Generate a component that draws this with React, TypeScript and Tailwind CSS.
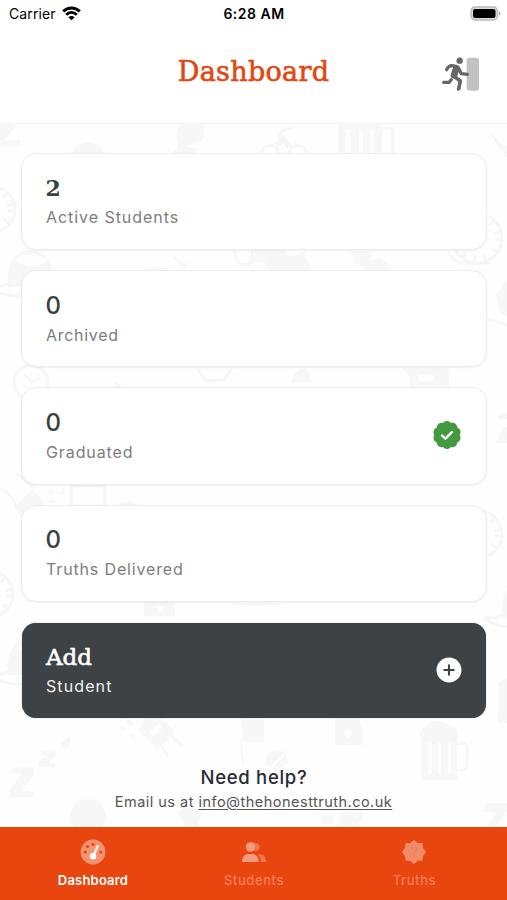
// src/App.tsx
import type { ReactNode } from "react";

interface StatCardProps {
    value: string;
    label: string;
    labelClass: string;
    valueClass?: string;
    icon?: ReactNode;
}

interface TabProps {
    label: string;
    labelClass: string;
    icon: ReactNode;
}

// Contorno ondulado del sello
const scallop = (cx: number, cy: number, r: number, bumps: number, depth: number) => {
    const points: string[] = [];
    for (let i = 0; i < 120; i++) {
        const a = (i / 120) * Math.PI * 2;
        const d = r - depth * (1 - Math.abs(Math.cos(a * (bumps / 2))));
        points.push(`${(cx + Math.sin(a) * d).toFixed(2)},${(cy - Math.cos(a) * d).toFixed(2)}`);
    }
    return points.join(" ");
};

const WifiIcon = () => (
    <svg width="19" height="15" viewBox="0 0 19 15" fill="none" stroke="#000" strokeWidth="2.9">
        <path d="M1.2 5.4C6 .8 13 .8 17.8 5.4" />
        <path d="M4.2 8.7C7.3 5.8 11.7 5.8 14.8 8.7" />
        <path d="M9.5 14.3 6.4 11.2C8.1 9.7 10.9 9.7 12.6 11.2Z" fill="#000" stroke="none" />
    </svg>
);

const BatteryIcon = () => (
    <svg width="31" height="15" viewBox="0 0 31 15">
        <rect x="1" y="1" width="26.5" height="13" rx="4" fill="#ddd" stroke="#b9b9b9" strokeWidth="1.3" />
        <rect x="3" y="3" width="22.5" height="9" rx="2" fill="#000" />
        <path d="M28.8 5.3C30.8 6 30.8 9 28.8 9.7Z" fill="#a8a8a8" />
    </svg>
);

const ExitIcon = () => (
    <svg width="40" height="37" viewBox="30 30 120 111" fill="none" stroke="#676767" strokeLinecap="round" strokeLinejoin="round">
        <rect x="110" y="38" width="37" height="99" rx="9" fill="#c2c2c2" stroke="none" />
        <circle cx="89" cy="47" r="9.5" fill="#676767" stroke="none" />
        <path d="M50 74C54 65 58 62 66 62L80 65" strokeWidth="10" />
        <path d="M79 70 72 91" strokeWidth="20" />
        <path d="M86 70 94 86 112 88" strokeWidth="10" />
        <path d="M72 94 91 108 86 132" strokeWidth="11" />
        <path d="M41 112H57L64 104" strokeWidth="10" />
    </svg>
);

const VerifiedIcon = () => (
    <svg className="-mt-[2px]" width="28" height="28" viewBox="0 0 28 28">
        <polygon points={scallop(14, 14, 14, 10, 1.3)} fill="#43993f" />
        <path d="M9 14.5 12.4 17.7 18.9 11.2" fill="none" stroke="#fff" strokeWidth="2.4" strokeLinecap="round" strokeLinejoin="round" />
    </svg>
);

const PlusIcon = () => (
    <svg className="-mt-[1px]" width="26" height="26" viewBox="0 0 26 26">
        <circle cx="13" cy="13" r="12.5" fill="#fff" />
        <path d="M13 8.3V17.7M8.3 13H17.7" stroke="#3e4244" strokeWidth="2.1" strokeLinecap="round" />
    </svg>
);

const GaugeIcon = () => (
    <svg width="26" height="26" viewBox="0 0 26 26">
        <circle cx="13" cy="13" r="12.4" fill="#f49372" />
        <g fill="#e8450f">
            <circle cx="5.2" cy="13" r="1.6" />
            <circle cx="7.5" cy="7.5" r="1.6" />
            <circle cx="13" cy="5.3" r="1.6" />
            <circle cx="20.8" cy="13" r="1.6" />
        </g>
        <path d="M17.7 7.2 13.2 17" stroke="#fff" strokeWidth="2.2" strokeLinecap="round" />
        <circle cx="13" cy="17.3" r="3.2" fill="#fff" />
    </svg>
);

const UsersIcon = () => (
    <svg width="26" height="26" viewBox="0 0 26 26">
        <g fill="#ef754a">
            <path d="M13.3 3.8a4.3 4.3 0 1 1 0 8.4q2.2-4.2 0-8.4Z" />
            <path d="M16.3 15.8C22 14 25 17.5 25.3 23H19.8C19.5 19.5 18.5 17.2 16.3 15.8Z" />
        </g>
        <circle cx="9.6" cy="8" r="4.8" fill="#f49b7d" />
        <path d="M1 23C1 18 3.5 15 7 15H11.5C15 15 17.7 18 17.7 23Z" fill="#f49b7d" />
    </svg>
);

const TruthIcon = () => (
    <svg width="26" height="26" viewBox="0 0 26 26">
        <polygon
            points="13,.8 16.4,3.9 21.4,3.9 22.1,9 25.2,13 22.1,17 21.4,21.6 16.4,22.1 13,25.2 9.6,22.1 4.6,21.6 3.9,17 .8,13 3.9,9 4.6,3.9 9.6,3.9"
            fill="#f28b68"
        />
        <path d="M10.3 10.2C10.6 7.2 15.8 7.4 15.6 10.4C15.5 12.5 13 12.2 13 14.6M13 17.5V18" fill="none" stroke="#f07c54" strokeWidth="1.3" strokeLinecap="round" />
    </svg>
);

const OrangeSlice = ({ x, y, r = 23 }: { x: number; y: number; r?: number }) => (
    <g transform={`translate(${x} ${y})`} fill="none" stroke="#f6f6f6">
        <circle r={r} strokeWidth="3" />
        <circle r={r - 4.5} strokeWidth="6" strokeDasharray="3 8" />
    </g>
);

const Cap = ({ x, y }: { x: number; y: number }) => (
    <g transform={`translate(${x} ${y})`}>
        <path d="M0 38C-2 16 5 3 17 0C31-2 42 5 44 18L43 43C28 43 12 33 0 38Z" />
        <path d="M8 11C15 1 32 3 41 10C32 17 18 18 8 11Z" fill="#fdfdfd" />
        <path d="M0 33C-8 39-13 35-17 37C-8 47 18 48 41 43" fill="none" stroke="#f6f6f6" strokeWidth="3" />
    </g>
);

// Dibujos tenues del fondo
const Doodles = () => (
    <svg className="absolute inset-0 h-full w-full" viewBox="0 124 507 702" fill="#f7f7f7" aria-hidden="true">
        <path d="M0 124H17L5 140H20V146H0Z" />
        <ellipse cx="88" cy="158" rx="17" ry="16" />
        <path d="M180 124H204V137C199 146 190 143 186 146L197 149L196 155H169L178 147L176 134Z" />
        <g fill="none" stroke="#f6f6f6" strokeWidth="3">
            <circle cx="270" cy="154" r="9" />
            <circle cx="298" cy="154" r="9" />
            <path d="M277 145 283 139 290 147" strokeWidth="6" />
            <path d="M279 140C277 134 283 128 292 128" />
        </g>
        <path d="M338 124H382V160H338Z" />
        <path d="M346 129H351V160H346ZM359 129H363V160H359ZM370 129H374V160H370Z" fill="#fdfdfd" />
        <path d="M382 128H391Q393 128 393 132V160" fill="none" stroke="#f6f6f6" strokeWidth="3" />
        <path d="M490 132 502 145 507 147V157L500 148Z" stroke="#f6f6f6" />
        <OrangeSlice x={-8} y={209} />
        <OrangeSlice x={477} y={238} r={25} />
        <path d="M448 252C454 259 455 263 466 263H490" fill="none" stroke="#f6f6f6" strokeWidth="3" />
        <Cap x={8} y={250} />
        <path d="M145 269Q160 265 172 269ZM172 256 184 269 188 264Z" />
        <path d="M233 246H252V260Q248 268 238 263Z" fill="none" stroke="#f6f6f6" strokeWidth="3" />
        <path d="M254 250H284Q287 258 296 255L305 250V257Q312 264 310 272H270L265 262H254Z" />
        <path d="M350 251H374L370 260L379 258L390 265L393 256L386 276H366L364 266L356 265Z" />
        <path d="M507 279 496 294 499 311 507 316Z" />
        <path d="M487 319 497 321 507 325" fill="none" stroke="#f6f6f6" strokeWidth="3" />
        <g fill="none" stroke="#f6f6f6" strokeWidth="3">
            <circle cx="31" cy="382" r="17" />
            <path d="M24 374 31 382 42 377M23 386H26M32 392V394" strokeWidth="2" />
            <path d="M197 368 205 380H224L232 368" />
        </g>
        <path d="M115 381 123 387H115ZM291 382Q297 363 309 371Q308 379 316 382Z" />
        <path d="M402 368H449V389H410V377ZM419 374H433V381H419Z" fillRule="evenodd" />
        <path d="M499 413H507V419H499ZM503 427H507V443H496Z" />
        <path d="M14 507 32 489 45 502 24 520Z" />
        <path d="M0 489Q12 493 16 507M16 473 34 488" fill="none" stroke="#f6f6f6" strokeWidth="2.5" />
        <path d="M48 491 51 488 54 496ZM59 494 64 487V495ZM48 502 53 499 57 503Z" />
        <path d="M71 486H105V506H71Z" fill="none" stroke="#f6f6f6" strokeWidth="3" />
        <ellipse cx="128" cy="505" rx="9" ry="4" />
        <OrangeSlice x={479} y={534} />
        <OrangeSlice x={-10} y={594} />
        <path d="M144 599H175V616H144ZM156 605 160 613 164 607Z" fillRule="evenodd" />
        <path d="M229 603H287Q270 606 246 605Z" />
        <Cap x={502} y={581} />
        <Cap x={8} y={638} />
        <path d="M118 728 123 725 126 731ZM126 718 134 722 129 728ZM130 736 134 733 136 741Z" />
        <path d="M145 718H161L174 730L168 741L157 749L139 730ZM150 731 160 723 163 727 153 736Z" fillRule="evenodd" />
        <path d="M160 743 168 756M168 733 183 746" stroke="#f6f6f6" strokeWidth="3" />
        <path d="M60 742 66 739 71 735 69 746 63 749ZM41 750H56V755L48 763H55V767H39V762L48 755H41ZM13 767H34V774L21 791H34V797H9V791L22 773H11Z" />
        <path d="M241 719H264V742H244ZM265 764Q264 752 277 750Q288 750 288 762L276 770Z" />
        <path d="M271 767 286 752" stroke="#fdfdfd" strokeWidth="2" />
        <path d="M242 738Q240 755 244 763" fill="none" stroke="#f7f7f7" strokeWidth="2" />
        <path d="M335 718H360V726H362V745H335ZM343 731 347 739 353 733 349 729Z" fillRule="evenodd" />
        <path d="M420 737Q419 728 428 725Q432 718 443 722L457 729Q459 738 457 746V780H422V745Z" />
        <path d="M428 742H432V774H428ZM438 742H441V774H438ZM448 742H451V774H448Z" fill="#fdfdfd" />
        <path d="M458 743H463Q467 743 467 748V765Q467 770 461 770H457" fill="none" stroke="#f6f6f6" strokeWidth="3" />
        <path d="M499 682 507 678V723H498ZM485 803H507V811L497 826H487L497 812H484Z" />
        <ellipse cx="88" cy="816" rx="18" ry="17" />
        <path d="M178 813 185 806 202 812 198 826H186ZM322 815H333V824H322ZM340 811H362V819L354 826H341Z" />
    </svg>
);

const StatCard = ({ value, label, labelClass, valueClass = "", icon }: StatCardProps) => (
    <div className="flex h-[97.4px] items-center justify-between rounded-[15px] border-[1.5px] border-[#ececec] bg-white pl-6 pr-[25px] shadow-[0_1px_2px_rgba(0,0,0,0.06)]">
        <div className="flex flex-col items-start pt-[2px]">
            <span className={`text-2xl leading-[30px] text-[#3b3f41] ${valueClass}`}>{value}</span>
            <span className={`pl-[0.5px] text-base leading-7 text-[#7d7d7d] ${labelClass}`}>{label}</span>
        </div>
        {icon}
    </div>
);

const Tab = ({ label, labelClass, icon }: TabProps) => (
    <div className="flex w-[160.5px] flex-col items-center pt-3">
        {icon}
        <span className={`mt-[5px] whitespace-nowrap text-[13px] leading-5 ${labelClass}`}>{label}</span>
    </div>
);

const App = () => {
    return (
        <div className="flex h-[900px] w-[507px] flex-col overflow-hidden bg-white font-['Inter',sans-serif]">
            {/* Barra de estado */}
            <div className="grid h-7 grid-cols-3 items-center pb-[2px] pl-[9px] pr-[6px] text-black">
                <div className="flex items-center gap-[6px] text-[14px] tracking-[0.1px]">
                    Carrier
                    <WifiIcon />
                </div>
                <span className="pr-[2px] text-center text-[14px] font-semibold tracking-[0.5px]">6:28 AM</span>
                <div className="flex justify-end">
                    <BatteryIcon />
                </div>
            </div>

            {/* Cabecera */}
            <header className="grid h-24 grid-cols-[80px_1fr_80px] items-start border-b border-[#f1f1f1] pt-[23px]">
                <h1 className="col-start-2 pt-px text-center font-['DejaVu_Serif',serif] text-[27px] leading-10 tracking-[0.3px] text-[#e3460f] [-webkit-text-stroke:0.6px_#e3460f]">
                    Dashboard
                </h1>
                <div className="pl-[13px] pt-[4px]">
                    <ExitIcon />
                </div>
            </header>

            {/* Contenido Principal */}
            <main className="relative h-[702.5px] bg-[#fefefe]">
                <Doodles />
                <div className="relative flex flex-col gap-5 px-[20.5px] pt-[28.5px]">
                    <StatCard value="2" label="Active Students" labelClass="tracking-[0.95px]" valueClass="font-['DejaVu_Serif',serif] text-[22px] font-bold" />
                    <StatCard value="0" label="Archived" labelClass="tracking-[0.7px]" valueClass="font-medium" />
                    <StatCard value="0" label="Graduated" labelClass="tracking-[0.9px]" valueClass="font-medium" icon={<VerifiedIcon />} />
                    <StatCard value="0" label="Truths Delivered" labelClass="tracking-[0.85px]" valueClass="font-medium" />

                    {/* Botón */}
                    <button className="ml-[1.5px] mr-[0.5px] mt-px flex h-[95px] items-center justify-between rounded-[14px] bg-[#3e4244] pl-6 pr-6 text-left text-white shadow-[0_0_1px_#777]">
                        <span className="flex flex-col pt-px">
                            <span className="font-['DejaVu_Serif',serif] text-[23px] leading-[30px] [-webkit-text-stroke:0.6px_#fff]">Add</span>
                            <span className="text-base leading-7 tracking-[1.1px] text-[#f0f0f0]">Student</span>
                        </span>
                        <PlusIcon />
                    </button>
                </div>
                <div className="relative mt-[45px] text-center">
                    <h2 className="pl-px text-[18.5px] font-medium leading-7 tracking-[0.7px] text-[#272c34]">Need help?</h2>
                    <p className="text-[14.5px] leading-[22px] tracking-[0.48px] text-[#555]">
                        Email us at <a className="underline underline-offset-2">info@thehonesttruth.co.uk</a>
                    </p>
                </div>
            </main>

            {/* Navegación */}
            <nav className="flex flex-1 justify-center bg-[#e8450f]">
                <Tab label="Dashboard" labelClass="font-semibold tracking-[0.2px] text-white" icon={<GaugeIcon />} />
                <Tab label="Students" labelClass="pl-px font-medium tracking-[0.6px] text-[#f28059]" icon={<UsersIcon />} />
                <Tab label="Truths" labelClass="pl-px font-medium tracking-[0.6px] text-[#f28059]" icon={<TruthIcon />} />
            </nav>
        </div>
    );
};

export default App;
